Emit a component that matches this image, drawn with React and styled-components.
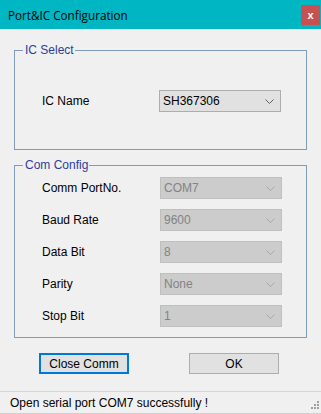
import styled, { createGlobalStyle } from 'styled-components';

const Global = createGlobalStyle`
  html, body {
    margin: 0;
    padding: 0;
    background: #f0f0f0;
  }
  * { box-sizing: border-box; }
`;

const Window = styled.div`
  width: 321px;
  height: 414px;
  background: #f0f0f0;
  font-family: 'Liberation Sans', Arial, sans-serif;
  font-size: 12px;
  color: #000;
  display: flex;
  flex-direction: column;
  overflow: hidden;
`;

const TitleBar = styled.div`
  height: 29px;
  background: #00b6c3;
  display: flex;
  align-items: flex-start;
  justify-content: space-between;
  padding: 5px 1px 0 8px;
  flex-shrink: 0;
`;

const Title = styled.div`
  font-family: 'Open Sans', 'Liberation Sans', sans-serif;
  font-size: 11.7px;
  line-height: 20px;
  color: #000;
`;

const CloseBtn = styled.div`
  width: 19px;
  height: 20px;
  background: #c75050;
  color: #fff;
  font-weight: bold;
  font-size: 11px;
  display: flex;
  align-items: center;
  justify-content: center;
`;

const Body = styled.div`
  flex: 1;
  display: flex;
  flex-direction: column;
  padding: 14px 14px 0 14px;
`;

const Group = styled.fieldset`
  margin: ${p => p.$top || 0}px 0 0 0;
  border: 1px solid #7f9db9;
  border-radius: 0;
  padding: 0 8px;
  min-width: 0;
  height: ${p => p.$h}px;
  flex-shrink: 0;
`;

const Legend = styled.legend`
  color: #2d3e9e;
  padding: 0 1px 0 2px;
  margin: 0;
  font-size: 12px;
  line-height: 14px;
`;

const GroupContent = styled.div`
  padding: ${p => p.$top}px 0 0 19px;
`;

const Row = styled.div`
  display: flex;
  align-items: center;
  height: 22px;
  margin-bottom: ${p => p.$gap || 0}px;
`;

const Label = styled.div`
  width: ${p => p.$w}px;
`;

const Select = styled.div`
  width: 122px;
  height: 22px;
  border: 1px solid ${p => (p.$disabled ? '#bfbfbf' : '#adadad')};
  background: ${p => (p.$disabled ? '#cccccc' : '#e1e1e1')};
  color: ${p => (p.$disabled ? '#838383' : '#000')};
  display: flex;
  align-items: center;
  justify-content: space-between;
  padding: 0 6px 0 3px;
`;

const Buttons = styled.div`
  display: flex;
  padding: 15px 0 0 25px;
  gap: 60px;
`;

const Button = styled.div`
  width: 90px;
  height: 21px;
  background: #e1e1e1;
  border: ${p => (p.$focus ? '2px solid #0078d7' : '1px solid #adadad')};
  display: flex;
  align-items: center;
  justify-content: center;
`;

const StatusBar = styled.div`
  margin-top: auto;
  height: 23px;
  border-top: 1px solid #d7d7d7;
  border-bottom: 1px solid #d0d0d0;
  display: flex;
  align-items: center;
  justify-content: space-between;
  padding: 0 2px 0 10px;
`;

const Grip = styled.svg`
  align-self: flex-end;
  margin-bottom: 2px;
`;

function Chevron({ color }) {
  return (
    <svg width="9" height="5" viewBox="0 0 9 5">
      <polyline points="0.5,0.5 4.5,4.5 8.5,0.5" fill="none" stroke={color} strokeWidth="1" />
    </svg>
  );
}

function Combo({ value, disabled }) {
  return (
    <Select $disabled={disabled}>
      <span>{value}</span>
      <Chevron color={disabled ? '#a8a8a8' : '#606060'} />
    </Select>
  );
}

const comRows = [
  ['Comm PortNo.', 'COM7'],
  ['Baud Rate', '9600'],
  ['Data Bit', '8'],
  ['Parity', 'None'],
  ['Stop Bit', '1'],
];

export default function App() {
  return (
    <Window>
      <Global />
      <TitleBar>
        <Title>Port&amp;IC Configuration</Title>
        <CloseBtn>x</CloseBtn>
      </TitleBar>
      <Body>
        <Group $h={107}>
          <Legend>IC Select</Legend>
          <GroupContent $top={33}>
            <Row>
              <Label $w={117}>IC Name</Label>
              <Combo value="SH367306" />
            </Row>
          </GroupContent>
        </Group>
        <Group $h={180} $top={8}>
          <Legend>Com Config</Legend>
          <GroupContent $top={5}>
            {comRows.map(([l, v], i) => (
              <Row key={l} $gap={i < comRows.length - 1 ? 10 : 0}>
                <Label $w={118}>{l}</Label>
                <Combo value={v} disabled />
              </Row>
            ))}
          </GroupContent>
        </Group>
        <Buttons>
          <Button $focus>Close Comm</Button>
          <Button>OK</Button>
        </Buttons>
      </Body>
      <StatusBar>
        <span>Open serial port COM7 successfully !</span>
        <Grip width="10" height="10" viewBox="0 0 10 10">
          {[[8, 0], [8, 3], [5, 3], [8, 6], [5, 6], [2, 6]].map(([x, y]) => (
            <rect key={`${x}-${y}`} x={x} y={y} width="2" height="2" fill="#a0a0a0" />
          ))}
        </Grip>
      </StatusBar>
    </Window>
  );
}
